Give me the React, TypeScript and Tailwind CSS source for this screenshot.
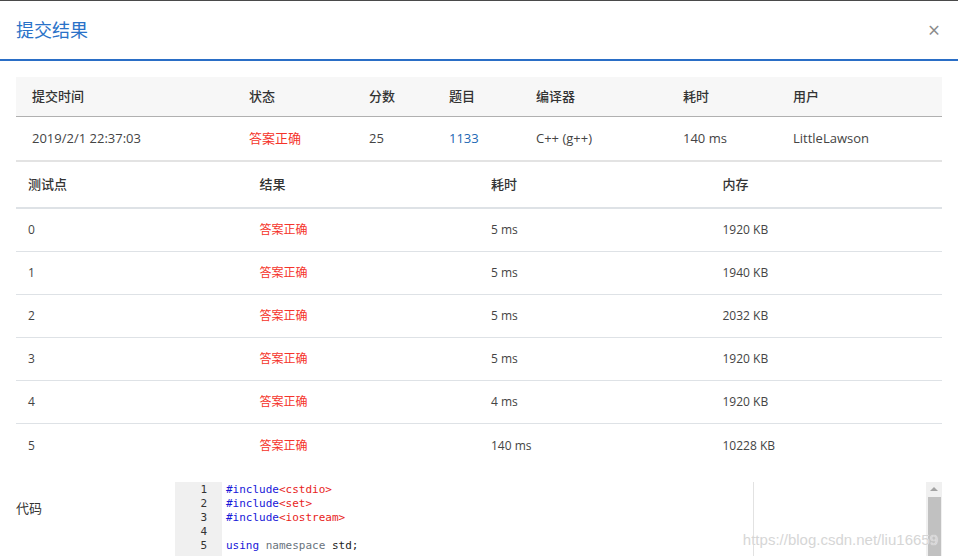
import React from 'react'

const font = { fontFamily: '"Open Sans", "Noto Sans CJK SC", sans-serif' }

const summaryCols = ['w-[217px]', 'w-[120px]', 'w-[80px]', 'w-[87px]', 'w-[147px]', 'w-[110px]', 'flex-1']
const summaryHead = ['提交时间', '状态', '分数', '题目', '编译器', '耗时', '用户']

const cases = [
  { id: '0', time: '5 ms', mem: '1920 KB' },
  { id: '1', time: '5 ms', mem: '1940 KB' },
  { id: '2', time: '5 ms', mem: '2032 KB' },
  { id: '3', time: '5 ms', mem: '1920 KB' },
  { id: '4', time: '4 ms', mem: '1920 KB' },
  { id: '5', time: '140 ms', mem: '10228 KB' },
]

function CodeLines() {
  return (
    <div className="flex-1 pl-1 font-['DejaVu_Sans_Mono',monospace] text-[11px] leading-[14px] text-[#222] whitespace-pre">
      <div>
        <span className="text-[#1717d8]">#include</span>
        <span className="text-[#e8231c]">{'<cstdio>'}</span>
      </div>
      <div>
        <span className="text-[#1717d8]">#include</span>
        <span className="text-[#e8231c]">{'<set>'}</span>
      </div>
      <div>
        <span className="text-[#1717d8]">#include</span>
        <span className="text-[#e8231c]">{'<iostream>'}</span>
      </div>
      <div>{' '}</div>
      <div>
        <span className="text-[#1717d8]">using</span> <span className="text-[#6a737d]">namespace</span> std;
      </div>
    </div>
  )
}

export default function App() {
  return (
    <div className="h-[556px] w-[958px] overflow-hidden border-t border-[#4a4a4a] bg-white" style={font}>
      <div className="flex h-[60px] items-center justify-between border-b-2 border-[#2a6ec6] px-4">
        <h1 className="text-[18px] text-[#2a72c8]">提交结果</h1>
        <span className="mr-[2px] text-[21px] leading-none text-[#8a8a8a]">×</span>
      </div>

      <div className="mx-4 mt-4">
        <div className="flex h-[40px] items-center border-b border-[#b0b0b0] bg-[#f7f7f7] text-[13px] font-medium text-[#333]">
          {summaryHead.map((h, i) => (
            <div key={h} className={`${summaryCols[i]} pl-4`}>{h}</div>
          ))}
        </div>
        <div className="flex h-[45px] items-center border-b-2 border-[#e3e3e3] text-[13px] text-[#444]">
          <div className={`${summaryCols[0]} pl-4`}>2019/2/1 22:37:03</div>
          <div className={`${summaryCols[1]} pl-4 text-[#f5332a]`}>答案正确</div>
          <div className={`${summaryCols[2]} pl-4`}>25</div>
          <div className={`${summaryCols[3]} pl-4 text-[#2168b4]`}>1133</div>
          <div className={`${summaryCols[4]} pl-4`}>C++ (g++)</div>
          <div className={`${summaryCols[5]} pl-4`}>140 ms</div>
          <div className={`${summaryCols[6]} pl-4`}>LittleLawson</div>
        </div>

        <div className="grid h-[47px] grid-cols-4 items-center border-b-2 border-[#dee2e6] text-[13px] font-medium text-[#333]">
          <div className="px-3">测试点</div>
          <div className="px-3">结果</div>
          <div className="px-3">耗时</div>
          <div className="px-3">内存</div>
        </div>
        {cases.map((c, i) => (
          <div
            key={c.id}
            className={`grid h-[43px] grid-cols-4 items-center text-[12px] text-[#444] ${i < cases.length - 1 ? 'border-b border-[#dee2e6]' : ''}`}
          >
            <div className="px-3">{c.id}</div>
            <div className="px-3 text-[#f5332a]">答案正确</div>
            <div className="px-3">{c.time}</div>
            <div className="px-3">{c.mem}</div>
          </div>
        ))}

        <div className="mt-[15px] flex">
          <div className="w-[159px] pt-[17px] text-[13px] text-[#333]">代码</div>
          <div className="relative flex h-[80px] flex-1 overflow-hidden">
            <div className="w-[47px] bg-[#f0f0f0] pr-[15px] pt-[1px] text-right font-['DejaVu_Sans_Mono',monospace] text-[11px] leading-[14px] text-[#333]">
              {[1, 2, 3, 4, 5].map((n) => (
                <div key={n}>{n}</div>
              ))}
            </div>
            <div className="relative flex flex-1 pt-[1px]">
              <CodeLines />
              <div className="absolute top-0 bottom-0 left-[531px] w-px bg-[#e2e2e2]" />
            </div>
            <div className="flex w-[16px] flex-col items-center bg-[#f0f0f0]">
              <div className="mt-[5px] h-0 w-0 border-x-[4px] border-b-[4px] border-x-transparent border-b-[#a3a3a3]" />
              <div className="mt-[6px] w-[13px] flex-1 bg-[#c1c1c1]" />
            </div>
            <div className="absolute top-[47px] right-[4px] font-['Liberation_Sans',sans-serif] text-[15px] text-[#d6d6d6] [text-shadow:0_0_1px_#fff]">
              https://blog.csdn.net/liu16659
            </div>
          </div>
        </div>
      </div>
    </div>
  )
}
